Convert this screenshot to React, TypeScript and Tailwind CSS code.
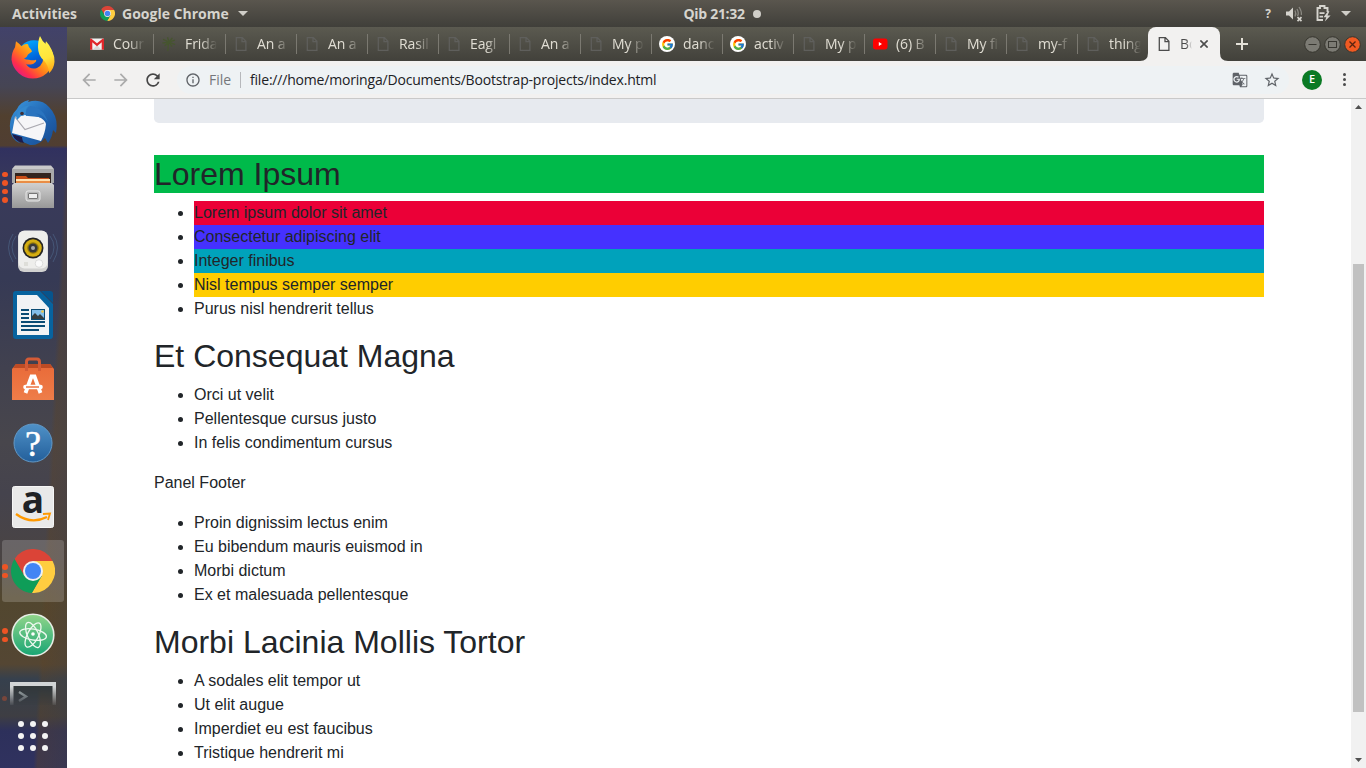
import React from 'react';
import { FcGoogle } from 'react-icons/fc';
import { MdGTranslate, MdStarBorder, MdRefresh, MdArrowBack, MdArrowForward, MdInfoOutline } from 'react-icons/md';

const UI = "font-['Open_Sans','Noto_Sans',sans-serif]";

function ChromeIcon({ className }: { className: string }) {
  return (
    <svg viewBox="2 2 44 44" className={className}>
      <path fill="#db4437" d="M43.6 14A22 22 0 0 0 5.54 12.03L15.34 29L24 24V14Z" />
      <path fill="#ffcd40" d="M43.6 14A22 22 0 0 1 22.86 45.97L32.66 29L24 24V14Z" />
      <path fill="#0f9d58" d="M22.86 45.97A22 22 0 0 1 5.54 12.03L15.34 29L24 24L32.66 29Z" />
      <circle cx="24" cy="24" r="10" fill="#f1f1f1" />
      <circle cx="24" cy="24" r="8" fill="#4285f4" />
    </svg>
  );
}

function PageIcon({ color }: { color: string }) {
  return (
    <svg viewBox="0 0 16 16" className="h-4 w-4" fill="none" stroke={color} strokeWidth="1.3">
      <path d="M3.3 1.6H9.4L12.9 5.2V14.4H3.3ZM9 1.8V5.6H12.7" />
    </svg>
  );
}

function GmailIcon() {
  return (
    <svg viewBox="0 0 16 16" className="h-4 w-4">
      <rect x="1" y="2.5" width="14" height="11.2" rx="1" fill="#f2f2f2" />
      <path d="M4 13.5 8 9l4 4.5z" fill="#d8d8d8" />
      <path d="M1 3.4C1 2.6 2 2.3 2.7 2.9L8 7.3l5.3-4.4c.7-.6 1.7-.3 1.7.5v10.3h-2.3V6.3L8 10.2 3.3 6.3v7.4H1z" fill="#e0272b" />
    </svg>
  );
}

function PalmIcon() {
  return (
    <svg viewBox="0 0 16 16" className="h-4 w-4" fill="none" stroke="#46552f" strokeWidth="1.3">
      <path d="M7.7 6C7 9 7.3 12 6.6 15M8 6 2 3.4M8 6 1.4 7.2M8 6 3.6 10M8 6 6.5 1.3M8 6 11.4 2M8 6l6-1.8M8 6l6.2 2.6M8 6l3 4.6" />
    </svg>
  );
}

function YoutubeIcon() {
  return (
    <svg viewBox="0 0 16 16" className="h-4 w-4">
      <rect x="1" y="2.5" width="14.5" height="11" rx="2.4" fill="#f00" />
      <path d="M6.8 5.9v4.2L10 8z" fill="#fff" />
    </svg>
  );
}

function GoogleTabIcon() {
  return (
    <span className="flex h-4 w-4 items-center justify-center rounded-full bg-white">
      <FcGoogle className="h-[13px] w-[13px]" />
    </span>
  );
}

const tabs: { kind: string; title: string }[] = [
  { kind: 'gmail', title: 'Cour' },
  { kind: 'palm', title: 'Frida' },
  { kind: 'page', title: 'An a' },
  { kind: 'page', title: 'An a' },
  { kind: 'page', title: 'Rasil' },
  { kind: 'page', title: 'Eagl' },
  { kind: 'page', title: 'An a' },
  { kind: 'page', title: 'My p' },
  { kind: 'google', title: 'danc' },
  { kind: 'google', title: 'activ' },
  { kind: 'page', title: 'My p' },
  { kind: 'youtube', title: '(6) B' },
  { kind: 'page', title: 'My fi' },
  { kind: 'page', title: 'my-f' },
  { kind: 'page', title: 'thing' },
];

function TabIcon({ kind }: { kind: string }) {
  if (kind === 'gmail') return <GmailIcon />;
  if (kind === 'palm') return <PalmIcon />;
  if (kind === 'google') return <GoogleTabIcon />;
  if (kind === 'youtube') return <YoutubeIcon />;
  return <PageIcon color="#5f5f5c" />;
}

function TopBar() {
  return (
    <header className={`${UI} grid h-[27px] shrink-0 grid-cols-[1fr_auto_1fr] items-center bg-linear-to-b from-[#5a564e] to-[#403f3a] text-[14px] font-bold text-[#d6d4ce]`}>
      <div className="flex items-center pl-3">
        <span className="w-[68px] whitespace-nowrap">Activities</span>
        <ChromeIcon className="ml-5 h-[15px] w-[15px]" />
        <span className="ml-[7px] w-[111px] whitespace-nowrap">Google Chrome</span>
        <svg viewBox="0 0 10 5" className="ml-[5px] h-[5px] w-[10px]"><path d="M0 0H10L5 5Z" fill="#d0cec8" /></svg>
      </div>
      <div className="flex items-center gap-1 pl-[78px]">
        <span className="w-[65px] whitespace-nowrap tracking-[-0.3px]">Qib 21:32</span>
        <span className="h-2 w-2 rounded-full bg-[#d0cec8]" />
      </div>
      <div className="flex items-center justify-end pr-[15px]">
        <span className="mr-[15px] text-[12px] font-bold">?</span>
        <svg viewBox="0 0 17 16" className="mr-[13px] h-4 w-[17px]" fill="none">
          <path d="M0 5.5H3L7 1.5V13.5L3 9.5H0Z" fill="#d6d4ce" />
          <path d="M9 4.5Q10.6 7.5 9 10.5M11 3Q13.4 7.5 11.4 10M13 1Q16 5.5 15.3 9" stroke="#8b8982" strokeWidth="1.3" />
          <path d="M11.5 11.2 15.5 15.2M15.5 11.2 11.5 15.2" stroke="#d6d4ce" strokeWidth="1.7" />
        </svg>
        <svg viewBox="0 0 15 17" className="mr-[10px] h-[17px] w-[15px]" fill="none" stroke="#d6d4ce">
          <path d="M7 15H1.5V3H4V1H8.5V3H11.5V7" strokeWidth="1.9" />
          <path d="M3.5 8.2H8.5M3.5 11.7H7" strokeWidth="1.7" />
          <path d="M12 6.3 7.5 12.2H10.3L8.8 16.5 14.6 10.6H11.5L13.4 6.3Z" fill="#d6d4ce" stroke="none" />
        </svg>
        <svg viewBox="0 0 10 5" className="h-[5px] w-[10px]"><path d="M0 0H10L5 5Z" fill="#d0cec8" /></svg>
      </div>
    </header>
  );
}

function FirefoxIcon() {
  return (
    <svg viewBox="0 0 44 44.5" className="h-[46px] w-[44px]" preserveAspectRatio="none">
      <defs>
        <linearGradient id="ffa" x1="0.9" y1="0.1" x2="0.15" y2="0.85">
          <stop offset="0" stopColor="#fff44f" /><stop offset="0.35" stopColor="#ffb716" /><stop offset="0.6" stopColor="#ff7b1c" /><stop offset="0.85" stopColor="#ff2f4a" /><stop offset="1" stopColor="#e91e78" />
        </linearGradient>
        <linearGradient id="ffb" x1="0.3" y1="0" x2="0.7" y2="1">
          <stop offset="0" stopColor="#00aaff" /><stop offset="0.5" stopColor="#0065dc" /><stop offset="1" stopColor="#312a86" />
        </linearGradient>
        <linearGradient id="ffc" x1="0.4" y1="0" x2="0.6" y2="1">
          <stop offset="0" stopColor="#fff44f" /><stop offset="0.6" stopColor="#ffe43a" /><stop offset="1" stopColor="#ffa515" />
        </linearGradient>
      </defs>
      <circle cx="23" cy="21" r="17" fill="url(#ffb)" />
      <path d="M5 5Q8 7 10.5 10Q14 7 17 8Q17 10 20 13L21 15L17 18Q16 21 13 22Q15 23 18 23Q22 24 25 23Q26 25 22 27Q17 28 15 27Q19 33 26 31Q34 27 32 17L35 5Q42 12 43 23A21.5 21.5 0 0 1 0.5 23Q0.5 16 4 11Z" fill="url(#ffa)" />
      <path d="M29 0Q31 5 35 8Q44 15 43.5 25Q43 32 38 36Q38 29 33 24Q27 19 27 11Q27 4 29 0Z" fill="url(#ffc)" />
    </svg>
  );
}

function ThunderbirdIcon() {
  return (
    <svg viewBox="0 0 50 48" className="h-[48px] w-[50px]">
      <defs>
        <linearGradient id="tb" x1="0" y1="0" x2="1" y2="1">
          <stop offset="0" stopColor="#3d9ae0" /><stop offset="0.5" stopColor="#2268b4" /><stop offset="1" stopColor="#174a91" />
        </linearGradient>
      </defs>
      <path d="M3 35Q-1 20 9 10Q12 3 21 1L20 3Q33-1 41 8Q51 18 48 34L45 31Q44 39 40 44L37 39Q30 47 22 46L8 40Q12 45 15 45Q6 43 3 35Z" fill="url(#tb)" />
      <path d="M4 35L14 38Q14 41 16 44Q7 43 4 35Z" fill="#1c1c4c" />
      <path d="M7 18Q13 14 20 17L31 18Q37 21 38 25Q37 35 33 42L4 34Z" fill="#f6f6f8" />
      <path d="M7 18L17 30.5L36 24" stroke="#aaa9b0" strokeWidth="1.2" fill="none" />
      <path d="M8 17Q10 8 22 6Q17 9 18 13Q18 17 13 17L9 21Z" fill="#3489cf" />
      <path d="M22 7Q35 8 40 23Q35 15 27 14Q31 16 33 19Q23 15 18 17Q17 10 22 7Z" fill="#2a74bf" />
      <circle cx="14" cy="14.5" r="1.8" fill="#402f36" />
    </svg>
  );
}

function FilesIcon() {
  return (
    <svg viewBox="0 0 44 44" className="h-[44px] w-[44px]">
      <defs><linearGradient id="fi" x1="0" y1="0" x2="0" y2="1"><stop offset="0" stopColor="#d0d0d0" /><stop offset="1" stopColor="#989898" /></linearGradient></defs>
      <path d="M4 0.5H40L43 4V18H1V4Z" fill="#c9c9c9" />
      <path d="M1 4H43V18H1Z" fill="#aaa" />
      <rect x="4" y="8" width="36" height="12" fill="#33241e" />
      <path d="M5 11H15L17 13H38V20H5Z" fill="#c84e18" />
      <path d="M5 14H39V16H5Z" fill="#ffe0b0" /><path d="M5 16H39V20H5Z" fill="#e98d46" />
      <path d="M3 18H41L43 20V43H1V20Z" fill="url(#fi)" />
      <rect x="15" y="26" width="14" height="10" rx="2" fill="#b9b9b9" stroke="#e8e8e8" strokeWidth="1" />
      <rect x="17.5" y="28.5" width="9" height="5" rx="0.5" fill="#eee" stroke="#777" strokeWidth="1" />
    </svg>
  );
}

function RhythmboxIcon() {
  return (
    <svg viewBox="0 0 50 46" className="h-[46px] w-[50px]">
      <path d="M8 8Q0 19 8 31M5 6Q-4 19 5 34M42 8Q50 19 42 31M45 6Q54 19 45 34" stroke="#5879a0" strokeOpacity="0.45" fill="none" />
      <rect x="10" y="3" width="30" height="41" rx="6" fill="#d1d1d0" />
      <rect x="10.5" y="2.5" width="29" height="38" rx="6" fill="#eeeeec" />
      <circle cx="25" cy="20" r="10.5" fill="#252525" />
      <circle cx="25" cy="20" r="8.8" fill="#d4ad12" />
      <circle cx="25" cy="20" r="5.8" fill="#967a09" />
      <circle cx="25" cy="20" r="4.5" fill="#383838" /><circle cx="25" cy="20" r="2" fill="#aaa" />
      <circle cx="31" cy="35.5" r="3.8" fill="#fafafa" stroke="#d0d0d0" strokeWidth="0.7" />
      <rect x="16" y="34" width="4" height="4" fill="#deded9" />
    </svg>
  );
}

function WriterIcon() {
  return (
    <svg viewBox="0 0 40 48" className="h-[48px] w-[40px]">
      <path d="M3 0H27L40 13V45Q40 48 37 48H3Q0 48 0 45V3Q0 0 3 0Z" fill="#07639f" />
      <path d="M28 0H37Q40 0 40 3V12Z" fill="#07548d" />
      <path d="M4 4H24L36 17V44H4Z" fill="#f1f3f5" />
      <path d="M8 19H16M8 23H16M8 27H16M8 31H32M8 35H32M8 39H26" stroke="#0a4b74" strokeWidth="1.8" />
      <rect x="18.5" y="18.5" width="13" height="10" fill="#82bde8" stroke="#0a4b74" />
      <path d="M19 28V25L22 22L25 25L27 23L31 27V28Z" fill="#343c3e" /><circle cx="29.5" cy="20.5" r="1.3" fill="#efc642" />
    </svg>
  );
}

function SoftwareIcon() {
  return (
    <svg viewBox="0 0 44 44" className="h-[44px] w-[44px]">
      <defs><linearGradient id="so" x1="0" y1="0" x2="0" y2="1"><stop offset="0" stopColor="#e96a38" /><stop offset="1" stopColor="#ee7d49" /></linearGradient></defs>
      <path d="M5 7H39L43 12V43H1V12Z" fill="url(#so)" />
      <path d="M5 7H39L42 11H2Z" fill="#bd4b24" />
      <path d="M15.5 14V5Q15.5 2 18 2H26Q28.5 2 28.5 5V14" fill="none" stroke="#d45b36" strokeWidth="3" />
      <path d="M14.5 36L20.5 19.5H23.5L29.5 36" fill="none" stroke="white" strokeWidth="3.8" />
      <path d="M14.5 30H29.5" stroke="white" strokeWidth="4.6" strokeLinecap="round" /><path d="M15 30H28" stroke="#ec7340" strokeWidth="1.5" />
    </svg>
  );
}

function HelpIcon() {
  return (
    <svg viewBox="0 0 40 40" className="h-[40px] w-[40px]">
      <defs><linearGradient id="he" x1="0" y1="0" x2="0" y2="1"><stop offset="0" stopColor="#4f91c7" /><stop offset="1" stopColor="#235f9b" /></linearGradient></defs>
      <circle cx="20" cy="20" r="19" fill="url(#he)" stroke="#6299c7" strokeWidth="1" />
      <text x="20" y="32.5" textAnchor="middle" fill="white" fontSize="36" className="font-['Liberation_Serif',serif]" stroke="white" strokeWidth="0.5">?</text>
    </svg>
  );
}

function AmazonIcon() {
  return (
    <svg viewBox="0 0 42 42" className="h-[42px] w-[42px] overflow-visible">
      <rect x="0.5" y="0.5" width="41" height="41" rx="2" fill="#e9e9e9" stroke="#f6f6f6" />
      <text x="21" y="27" textAnchor="middle" fill="#202225" fontSize="37" fontWeight="700" className="font-['Open_Sans',sans-serif]">a</text>
      <path d="M4 28Q19 39 35 31" stroke="#ff9900" strokeWidth="2.3" fill="none" /><path d="M31 28L38 27.5L36 34" stroke="#ff9900" strokeWidth="1.8" fill="none" />
    </svg>
  );
}

function AtomIcon() {
  return (
    <svg viewBox="0 0 44 44" className="h-[44px] w-[44px]">
      <defs><linearGradient id="at" x1="0" y1="0" x2="0" y2="1"><stop offset="0" stopColor="#91d58a" /><stop offset="1" stopColor="#18a574" /></linearGradient></defs>
      <circle cx="22" cy="22" r="20.8" fill="url(#at)" stroke="#e7eee6" strokeWidth="1.6" />
      <g fill="none" stroke="#eef8ef" strokeWidth="1.3">
        <ellipse cx="22" cy="21.5" rx="13.5" ry="5.5" transform="rotate(10 22 22)" />
        <ellipse cx="22" cy="22" rx="13.5" ry="5.5" transform="rotate(66 22 22)" />
        <ellipse cx="22" cy="22" rx="13.5" ry="5.5" transform="rotate(-62 22 22)" />
      </g>
      <circle cx="22" cy="21" r="1.8" fill="white" />
    </svg>
  );
}

function TerminalIcon() {
  return (
    <svg viewBox="0 0 46 23" className="h-[23px] w-[46px]">
      <defs>
        <linearGradient id="tf" x1="0" y1="0" x2="0" y2="1"><stop offset="0.2" stopColor="#fff" /><stop offset="1" stopColor="#fff" stopOpacity="0.08" /></linearGradient>
        <mask id="tm"><rect width="46" height="23" fill="url(#tf)" /></mask>
      </defs>
      <g mask="url(#tm)">
        <rect width="46" height="30" fill="#d2d5d5" /><rect x="3.5" y="4" width="39" height="26" fill="#32383a" />
        <path d="M9 10L16 14.5L9 19" fill="none" stroke="#abb5b4" strokeWidth="2.4" />
      </g>
    </svg>
  );
}

const dockItems: { icon: () => React.JSX.Element; dots: number }[] = [
  { icon: FirefoxIcon, dots: 0 },
  { icon: ThunderbirdIcon, dots: 0 },
  { icon: FilesIcon, dots: 4 },
  { icon: RhythmboxIcon, dots: 0 },
  { icon: WriterIcon, dots: 0 },
  { icon: SoftwareIcon, dots: 0 },
  { icon: HelpIcon, dots: 0 },
  { icon: AmazonIcon, dots: 0 },
  { icon: () => <ChromeIcon className="h-[44px] w-[44px]" />, dots: 2 },
  { icon: AtomIcon, dots: 2 },
];

function Dock() {
  return (
    <nav className="flex w-[67px] shrink-0 flex-col overflow-hidden bg-[linear-gradient(93deg,transparent_68%,#5b432866_72%,#48413d66),linear-gradient(180deg,#42426a_0%,#464554_8%,#51402f_12%,#503e32_16%,#31315f_16.4%,#393a5a_22%,#363a55_34%,#41414f_46%,#48464c_56%,#45434d_63%,#4a4443_72%,#52472f_77%,#544633_86%,#36404d_88%,#3e3e43_93%,#2d305b_95%,#30325f_100%)] pr-px">
      {dockItems.map(({ icon: Icon, dots }, i) => (
        <div key={i} className="relative flex h-16 shrink-0 items-center justify-center">
          <div className={i === 8 ? 'flex h-[62px] w-[62px] items-center justify-center rounded-[3px] bg-white/18' : 'flex h-[62px] w-[62px] items-center justify-center'}>
            <Icon />
          </div>
          <div className="absolute top-0 left-[2px] flex h-full flex-col items-center justify-center gap-[3px]">
            {Array.from({ length: dots }, (_, d) => <span key={d} className="h-[5.5px] w-[5.5px] rounded-full bg-[#ee5424]" />)}
          </div>
        </div>
      ))}
      <div className="relative flex h-[38px] shrink-0 items-end justify-center">
        <TerminalIcon />
        <span className="absolute top-[29px] left-[2px] h-[5px] w-[5px] rounded-full bg-[#ee5424]/35" />
      </div>
      <div className="mt-4 grid grid-cols-[repeat(3,6px)] justify-center gap-[6px]">
        {Array.from({ length: 9 }, (_, i) => <span key={i} className="h-[6px] w-[6px] rounded-full bg-[#f4f4f4]" />)}
      </div>
    </nav>
  );
}

function tabClass(i: number) {
  if (i === 0) return 'flex h-full w-[71px] shrink-0 items-center pl-[6px]';
  if (i === 1) return 'flex h-full w-[72px] shrink-0 items-center pl-[7px]';
  if (i === 14) return 'flex h-full w-[70px] shrink-0 items-center pl-[7px]';
  return 'flex h-full w-[71px] shrink-0 items-center pl-[7px]';
}

function TabStrip() {
  return (
    <div className={`${UI} flex h-[34px] shrink-0 bg-linear-to-b from-[#5b5a50] to-[#42413b] pl-4 text-[14px] text-[#e0ddd3]`}>
      {tabs.map((t, i) => (
        <div key={i} className={tabClass(i)}>
          <span className="shrink-0"><TabIcon kind={t.kind} /></span>
          <span className="ml-2 w-8 mask-[linear-gradient(to_right,black_50%,transparent)] pb-px tracking-[-0.1px] whitespace-nowrap">{t.title}</span>
          {i < 14 && <span className="ml-auto h-5 w-px bg-[#7b7971]" />}
        </div>
      ))}
      <div className="relative flex w-[72px] shrink-0 items-center rounded-t-lg bg-[#f2f1f0] text-[#4b4b4b]">
        <svg viewBox="0 0 8 8" className="absolute bottom-0 -left-2 h-2 w-2"><path d="M8 0V8H0Q8 8 8 0Z" fill="#f2f1f0" /></svg>
        <svg viewBox="0 0 8 8" className="absolute -right-2 bottom-0 h-2 w-2"><path d="M0 0V8H8Q0 8 0 0Z" fill="#f2f1f0" /></svg>
        <span className="ml-2"><PageIcon color="#4c4c4c" /></span>
        <span className="ml-2 w-[12px] overflow-hidden mask-[linear-gradient(to_right,black_50%,transparent)] pb-px whitespace-nowrap">Bo</span>
        <svg viewBox="0 0 8 8" className="ml-2 h-2 w-2"><path d="M0.4 0.4 7.6 7.6M7.6 0.4 0.4 7.6" stroke="#4c4c4c" strokeWidth="1.6" /></svg>
      </div>
      <svg viewBox="0 0 12 12" className="ml-4 h-3 w-3 self-center"><path d="M6 0V12M0 6H12" stroke="#e4e1d8" strokeWidth="2" /></svg>
      <div className="ml-auto flex items-center gap-[3px] pr-[5px]">
        {['min', 'max', 'close'].map((k) => (
          <svg key={k} viewBox="0 0 17 17" className="h-[17px] w-[17px]" fill="none">
            <circle cx="8.5" cy="8.5" r="7.8" fill={k === 'close' ? '#f15a22' : '#7c7b74'} stroke="#37362f" strokeWidth="1" />
            {k === 'min' && <path d="M4.5 8.5H12.5" stroke="#383731" />}
            {k === 'max' && <rect x="4.5" y="5.5" width="8" height="6" stroke="#383731" />}
            {k === 'close' && <path d="M5.5 5.5 11.5 11.5M11.5 5.5 5.5 11.5" stroke="#57230f" strokeWidth="1.3" />}
          </svg>
        ))}
      </div>
    </div>
  );
}

function Toolbar() {
  return (
    <div className={`${UI} flex h-[38px] shrink-0 items-center border-b border-[#c9c9c9] bg-[#f2f1f0] pl-3 text-[14px]`}>
      <MdArrowBack className="h-5 w-5 text-[#ababab]" />
      <MdArrowForward className="ml-3 h-5 w-5 text-[#ababab]" />
      <MdRefresh className="ml-3 h-5 w-5 text-[#464646]" />
      <div className="ml-[14px] flex h-7 w-[1112px] shrink-0 items-center rounded-full bg-[#eef2f4] pl-2">
        <MdInfoOutline className="h-4 w-4 text-[#5f6368]" />
        <span className="ml-2 w-[24px] whitespace-nowrap text-[#75777b]">File</span>
        <span className="ml-[7px] h-4 w-px bg-[#b6b8bb]" />
        <span className="ml-[9px] whitespace-nowrap tracking-[-0.19px] text-[#202124]">file:///home/moringa/Documents/Bootstrap-projects/index.html</span>
        <MdGTranslate className="mr-[15px] ml-auto h-4 w-4 text-[#5f6368]" />
        <MdStarBorder className="mr-2 h-[18px] w-[18px] text-[#5f6368]" />
      </div>
      <span className="ml-[13px] flex h-5 w-5 items-center justify-center rounded-full bg-[#0b7a24] text-[11px] font-semibold text-white">E</span>
      <div className="ml-[21px] flex flex-col gap-[2px]">
        <span className="h-[3px] w-[3px] rounded-full bg-[#4c4c4c]" />
        <span className="h-[3px] w-[3px] rounded-full bg-[#4c4c4c]" />
        <span className="h-[3px] w-[3px] rounded-full bg-[#4c4c4c]" />
      </div>
    </div>
  );
}

const heading = 'mb-2 text-[32px] leading-[38px] font-medium';
const list = 'mb-4 list-disc pl-10';

function Document() {
  return (
    <main className="flex min-w-0 flex-1 flex-col items-center overflow-hidden bg-white font-['Liberation_Sans',Arial,sans-serif] text-[16px] leading-6 text-[#212529]">
      <div className="w-[1110px]">
        <div className="mb-8 h-6 rounded-b-[4.8px] bg-[#e7eaef]" />
        <h2 className="mb-2 bg-[#00ba4a] text-[32px] leading-[38px] font-medium">Lorem Ipsum</h2>
        <ul className={list}>
          <li className="bg-[#eb0037]">Lorem ipsum dolor sit amet</li>
          <li className="bg-[#4531ff]">Consectetur adipiscing elit</li>
          <li className="bg-[#00a2bb]">Integer finibus</li>
          <li className="bg-[#ffcd00]">Nisl tempus semper semper</li>
          <li>Purus nisl hendrerit tellus</li>
        </ul>
        <h2 className={heading}>Et Consequat Magna</h2>
        <ul className={list}>
          <li>Orci ut velit</li>
          <li>Pellentesque cursus justo</li>
          <li>In felis condimentum cursus</li>
        </ul>
        <p className="mb-4">Panel Footer</p>
        <ul className={list}>
          <li>Proin dignissim lectus enim</li>
          <li>Eu bibendum mauris euismod in</li>
          <li>Morbi dictum</li>
          <li>Ex et malesuada pellentesque</li>
        </ul>
        <h2 className={heading}>Morbi Lacinia Mollis Tortor</h2>
        <ul className={list}>
          <li>A sodales elit tempor ut</li>
          <li>Ut elit augue</li>
          <li>Imperdiet eu est faucibus</li>
          <li>Tristique hendrerit mi</li>
        </ul>
      </div>
    </main>
  );
}

function ScrollBar() {
  return (
    <div className="flex w-[15px] shrink-0 flex-col items-center bg-[#f1f1f1]">
      <svg viewBox="0 0 7 4" className="mt-[6px] h-1 w-[7px]"><path d="M0 4H7L3.5 0Z" fill="#505050" /></svg>
      <div className="mt-[155px] h-[448px] w-[11px] bg-[#c1c1c1]" />
      <svg viewBox="0 0 7 4" className="mt-auto mb-[6px] h-1 w-[7px]"><path d="M0 0H7L3.5 4Z" fill="#505050" /></svg>
    </div>
  );
}

export default function App() {
  return (
    <div className="flex h-[768px] w-[1366px] flex-col overflow-hidden">
      <TopBar />
      <div className="flex min-h-0 flex-1">
        <Dock />
        <div className="flex min-w-0 flex-1 flex-col">
          <TabStrip />
          <Toolbar />
          <div className="flex min-h-0 flex-1">
            <Document />
            <ScrollBar />
          </div>
        </div>
      </div>
    </div>
  );
}
